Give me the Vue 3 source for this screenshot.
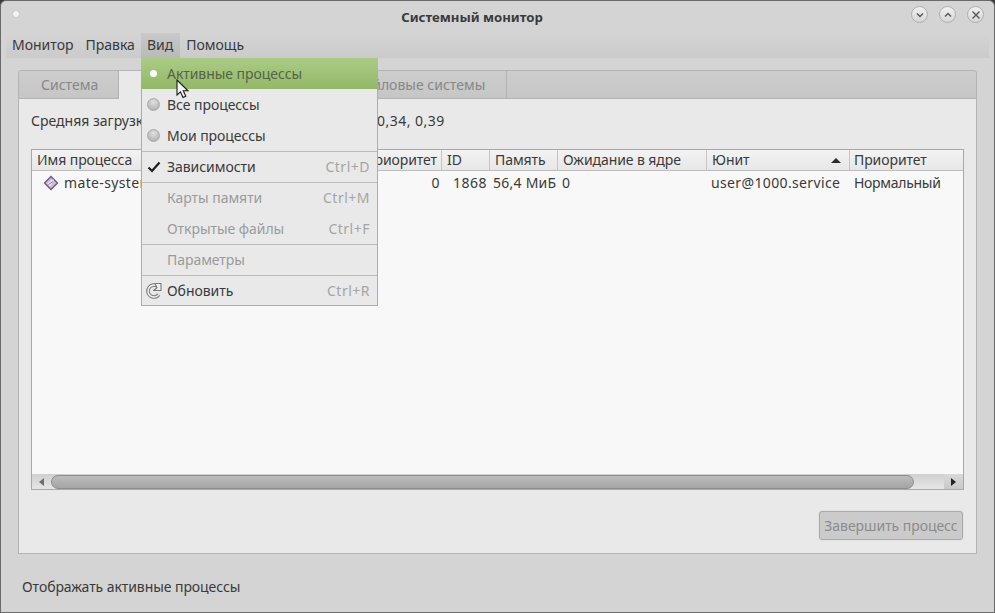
<script setup>
const columns = [
  { label: 'Имя процесса', width: 328 },
  { label: 'Приоритет', width: 82 },
  { label: 'ID', width: 48 },
  { label: 'Память', width: 68 },
  { label: 'Ожидание в ядре', width: 149 },
  { label: 'Юнит', width: 143, sort: true },
  { label: 'Приоритет', width: 113 }
]
const menuTop = ['Монитор', 'Правка', 'Вид', 'Помощь']
const menuItems = [
  { label: 'Активные процессы', mark: 'dot', active: true },
  { label: 'Все процессы', mark: 'radio' },
  { label: 'Мои процессы', mark: 'radio' },
  { label: 'Зависимости', mark: 'check', key: 'Ctrl+D', sep: true },
  { label: 'Карты памяти', key: 'Ctrl+M', disabled: true, sep: true },
  { label: 'Открытые файлы', key: 'Ctrl+F', disabled: true },
  { label: 'Параметры', disabled: true, sep: true },
  { label: 'Обновить', mark: 'refresh', key: 'Ctrl+R', sep: true, last: true }
]
</script>

<template>
  <div class="window">
    <header class="titlebar">
      <span class="app-dot"></span>
      <span class="title">Системный монитор</span>
      <div class="wm">
        <button class="wm-btn" aria-label="Свернуть">
          <svg width="10" height="10" viewBox="0 0 10 10"><path d="M2 3.500 5 6.500 8 3.500" fill="none" stroke="#555" stroke-width="1.400"/></svg>
        </button>
        <button class="wm-btn" aria-label="Развернуть">
          <svg width="10" height="10" viewBox="0 0 10 10"><path d="M2 6.500 5 3.500 8 6.500" fill="none" stroke="#555" stroke-width="1.400"/></svg>
        </button>
        <button class="wm-btn" aria-label="Закрыть">
          <svg width="10" height="10" viewBox="0 0 10 10"><path d="M1.500 1.500 8.500 8.500M8.500 1.500 1.500 8.500" fill="none" stroke="#555" stroke-width="1.400"/></svg>
        </button>
      </div>
    </header>

    <nav class="menubar">
      <span v-for="m in menuTop" :key="m" class="menubar-item" :class="{ open: m === 'Вид' }">{{ m }}</span>
    </nav>

    <main class="body">
      <div class="notebook">
        <div class="tabs">
          <span class="tab first">Система</span>
          <span class="tab current">Процессы</span>
          <span class="tab">Ресурсы</span>
          <span class="tab">Файловые системы</span>
        </div>
        <section class="page">
          <p class="load">Средняя загрузка <span class="squeeze">за последние 1, 5, 15 минут: 0,28, </span><span class="digits">0,34, 0,39</span></p>
          <div class="table">
            <div class="thead">
              <div v-for="(c, i) in columns" :key="i" class="th" :style="{ width: c.width + 'px' }">
                <span>{{ c.label }}</span>
                <i v-if="c.sort" class="sort"></i>
              </div>
            </div>
            <div class="rows">
              <div class="row">
                <div class="td name" :style="{ width: columns[0].width + 'px' }">
                  <svg class="proc" width="16" height="16" viewBox="0 0 16 16">
                    <path d="M8 1.500 14.500 8 8 14.500 1.500 8Z" fill="#cbbcd6" stroke="#6f5580" stroke-width="1.300"/>
                    <path d="M4.500 8.500 8 5.500 11 4.500 9.500 8 7 11.500Z" fill="#efe9f3"/>
                    <path d="M5.500 9.500 10 6.500" fill="none" stroke="#8a6fa0" stroke-width="1"/>
                  </svg>
                  <span class="latin">mate-system-monitor</span>
                </div>
                <div class="td num digits zero" :style="{ width: columns[1].width + 'px' }">0</div>
                <div class="td num digits" :style="{ width: columns[2].width + 'px' }">1868</div>
                <div class="td mem" :style="{ width: columns[3].width + 'px' }">56,4 МиБ</div>
                <div class="td" :style="{ width: columns[4].width + 'px' }">0</div>
                <div class="td" :style="{ width: columns[5].width + 'px' }"><span class="latin">user@1000.service</span></div>
                <div class="td tight" :style="{ width: columns[6].width + 'px' }">Нормальный</div>
              </div>
            </div>
            <div class="hscroll">
              <span class="sb-btn left"><i class="arrow-l"></i></span>
              <span class="thumb"></span>
              <span class="sb-btn right"><i class="arrow-r"></i></span>
            </div>
          </div>
          <div class="actions">
            <button class="end" disabled>Завершить процесс</button>
          </div>
        </section>
      </div>
    </main>

    <footer class="status"><span class="status-text">Отображать активные процессы</span></footer>

    <div class="menu">
      <div
        v-for="item in menuItems"
        :key="item.label"
        class="menu-item"
        :class="{ active: item.active, disabled: item.disabled, sep: item.sep, last: item.last }"
      >
        <span class="mark">
          <i v-if="item.mark === 'dot'" class="dot"></i>
          <i v-else-if="item.mark === 'radio'" class="radio"></i>
          <svg v-else-if="item.mark === 'check'" width="14" height="14" viewBox="0 0 14 14">
            <path d="M1.500 7.500 5 11 12.500 2.500" fill="none" stroke="#1c1c1c" stroke-width="2.200"/>
          </svg>
          <svg v-else-if="item.mark === 'refresh'" width="16" height="16" viewBox="0 0 16 16">
            <path d="M12.800 11.600A6 6 0 1 1 11.500 3.200" fill="none" stroke="#7a7a7a" stroke-width="3.600"/>
            <path d="M12.800 11.600A6 6 0 1 1 11.500 3.200" fill="none" stroke="#efefef" stroke-width="1.600"/>
            <path d="M9 .5H15V7.500H7.500L11 4.800Z" fill="#efefef" stroke="#7a7a7a" stroke-width="1.100" stroke-linejoin="round"/>
          </svg>
        </span>
        <span class="menu-label">{{ item.label }}</span>
        <span v-if="item.key" class="menu-key">{{ item.key }}</span>
      </div>
    </div>

    <svg class="cursor" width="15" height="21" viewBox="0 0 15 21">
      <path d="M1 1V16L4.500 12.800 7 18.500 9.800 17.300 7.300 11.800H12Z" fill="#f4f4f4" stroke="#1a1a1a" stroke-width="1.100"/>
    </svg>
  </div>
</template>

<style>
html, body { margin: 0; padding: 0; background: #3a3a3a; overflow: hidden; }
</style>

<style scoped>
.window {
  position: relative;
  box-sizing: border-box;
  width: 995px;
  height: 613px;
  display: flex;
  flex-direction: column;
  background: #d4d4d4;
  border: 1px solid #6a6a6a;
  border-radius: 6px 6px 0 0;
  font-family: "Noto Sans", sans-serif;
  font-size: 14px;
  color: #3c3c3c;
  overflow: hidden;
}
.titlebar {
  flex: 0 0 32px;
  box-sizing: border-box;
  display: flex;
  align-items: center;
  justify-content: center;
  padding-right: 51px;
  position: relative;
}
.app-dot {
  position: absolute;
  left: 12px;
  top: 10px;
  width: 6px;
  height: 6px;
  border-radius: 50%;
  background: #f4f4f4;
  box-shadow: 0 0 1px #999;
}
.title { font-weight: 700; font-size: 13.2px; color: #3a3a3a; }
.wm {
  position: absolute;
  right: 10px;
  top: 5px;
  display: flex;
  gap: 11px;
}
.wm-btn {
  width: 17px;
  height: 17px;
  padding: 0;
  box-sizing: border-box;
  display: flex;
  align-items: center;
  justify-content: center;
  border: 1px solid #aeaeae;
  border-radius: 50%;
  background: linear-gradient(#f1f1f1, #d6d6d6);
}
.menubar {
  flex: 0 0 25px;
  margin: 0 5px;
  display: flex;
  background: linear-gradient(#d4d4d4, #cbcbcb);
}
.menubar-item {
  padding: 0 6px;
  line-height: 23px;
  color: #3a3a3a;
}
.menubar-item.open { padding-right: 7px; background: linear-gradient(#c9c9c9, #b9b9b9); }
.body { flex: 1; padding: 12px 18px 0 17px; display: flex; min-height: 0; }
.notebook { flex: 1; display: flex; flex-direction: column; min-height: 0; }
.tabs {
  flex: 0 0 29px;
  box-sizing: border-box;
  display: flex;
  align-items: stretch;
  background: linear-gradient(#cdcdcd, #c6c6c6);
  border: 1px solid #b3b3b3;
  border-radius: 3px 3px 0 0;
}
.tab {
  box-sizing: border-box;
  display: flex;
  align-items: center;
  padding: 0 21px;
  color: #878787;
  border-right: 1px solid #b3b3b3;
}
.tab.first { padding: 0 20px 0 22px; }
.tab.current { padding-right: 24px; background: #e9e9e9; margin-bottom: -1px; color: #3c3c3c; }
.page {
  flex: 1;
  box-sizing: border-box;
  display: flex;
  flex-direction: column;
  background: #e9e9e9;
  border: 1px solid #b3b3b3;
  border-top: 0;
  padding: 0 12px;
  min-height: 0;
}
.load { margin: 12px 0 18px; line-height: 20px; white-space: nowrap; color: #3a3a3a; }
.squeeze { letter-spacing: -0.2px; }
.digits { letter-spacing: 0.5px; }
.latin { letter-spacing: 0.36px; }
.tight { letter-spacing: -0.3px; }
.table {
  flex: 0 0 341px;
  box-sizing: border-box;
  display: flex;
  flex-direction: column;
  background: #f8f8f8;
  border: 1px solid #a9a9a9;
  width: 933px;
}
.thead { display: flex; flex: 0 0 21px; box-sizing: border-box; border-bottom: 1px solid #bdbdbd; background: linear-gradient(#f3f3f3, #e7e7e7); }
.th {
  box-sizing: border-box;
  padding: 0 4px 0 5px;
  line-height: 20px;
  letter-spacing: -0.08px;
  border-right: 1px solid #c6c6c6;
  color: #3a3a3a;
  display: flex;
  align-items: center;
  justify-content: space-between;
  white-space: nowrap;
  overflow: hidden;
}
.th:nth-child(2) { justify-content: flex-end; }
.th:last-child { border-right: 0; padding-left: 4px; }
.sort {
  width: 0; height: 0;
  margin-right: 4px;
  border-left: 5px solid transparent;
  border-right: 5px solid transparent;
  border-bottom: 5px solid #2c2c2c;
}
.rows { flex: 1; min-height: 0; }
.row { display: flex; height: 23px; align-items: center; }
.td { box-sizing: border-box; padding: 0 3px 0 4px; white-space: nowrap; overflow: hidden; color: #3a3a3a; }
.td.num { text-align: right; padding-right: 3px; }
.td.zero { padding-right: 2px; }
.td.mem { padding-left: 3px; letter-spacing: 0.25px; }
.td.name { display: flex; align-items: center; gap: 5px; padding-left: 11px; }
.proc { flex: none; }
.hscroll {
  flex: 0 0 15px;
  display: flex;
  align-items: center;
  background: linear-gradient(#d0d0d0, #e6e6e6);
}
.sb-btn { height: 15px; display: flex; align-items: center; justify-content: center; }
.sb-btn.left { width: 18px; }
.sb-btn.right { width: 19px; margin-left: auto; background: linear-gradient(#d9d9d9, #c9c9c9); }
.arrow-l { border: 4px solid transparent; border-left: 0; border-right: 5px solid #6f6f6f; }
.arrow-r { border: 4px solid transparent; border-right: 0; border-left: 5px solid #222; }
.thumb {
  width: 863px;
  height: 14px;
  margin-left: 1px;
  border: 1px solid #8d8d8d;
  box-sizing: border-box;
  border-radius: 7px;
  background: linear-gradient(#bcbcbc, #a5a5a5);
}
.actions { flex: 1; display: flex; justify-content: flex-end; align-items: flex-start; padding-top: 21px; }
.end {
  width: 144px;
  height: 29px;
  margin-right: 1px;
  padding: 0;
  font: inherit;
  letter-spacing: -0.05px;
  color: #8b8b8b;
  background: #cbcbcb;
  border: 1px solid #ababab;
  border-radius: 3px;
  box-shadow: 0 0 0 1px #e2e2e2;
}
.status {
  flex: 0 0 58px;
  box-sizing: border-box;
  display: flex;
  align-items: center;
  padding: 7px 0 0 21px;
  color: #3a3a3a;
}
.status-text { letter-spacing: -0.07px; }

.menu {
  position: absolute;
  left: 140px;
  top: 57px;
  width: 237px;
  box-sizing: border-box;
  background: #e9e9e9;
  border: 1px solid #acacac;
  border-top: 0;
}
.menu-item {
  box-sizing: border-box;
  height: 31px;
  display: flex;
  align-items: center;
  padding: 0 7px 0 25px;
  position: relative;
  color: #3a3a3a;
}
.menu-item.sep { border-top: 1px solid #bcbcbc; padding-bottom: 1px; }
.menu-item.last { height: 30px; }
.menu-item.active {
  margin: 0 -1px;
  padding-left: 26px;
  padding-right: 8px;
  background: linear-gradient(#abcb85, #93b868);
  color: #556347;
}
.menu-item.disabled { color: #9b9b9b; }
.mark {
  position: absolute;
  left: 4px;
  top: 0;
  width: 16px;
  height: 100%;
  display: flex;
  align-items: center;
  justify-content: center;
}
.dot { width: 7px; height: 7px; border-radius: 50%; background: #fafafa; }
.radio {
  box-sizing: border-box;
  width: 13px; height: 13px;
  margin-left: -1px;
  border-radius: 50%;
  border: 1px solid #a9a9a9;
  background: radial-gradient(circle at 50% 30%, #e0e0e0, #a8a8a8);
}
.menu-label { flex: 1; white-space: nowrap; letter-spacing: -0.05px; }
.menu-key { color: #a5a5a5; letter-spacing: 0.5px; }
.cursor { position: absolute; left: 175px; top: 78px; }
</style>
